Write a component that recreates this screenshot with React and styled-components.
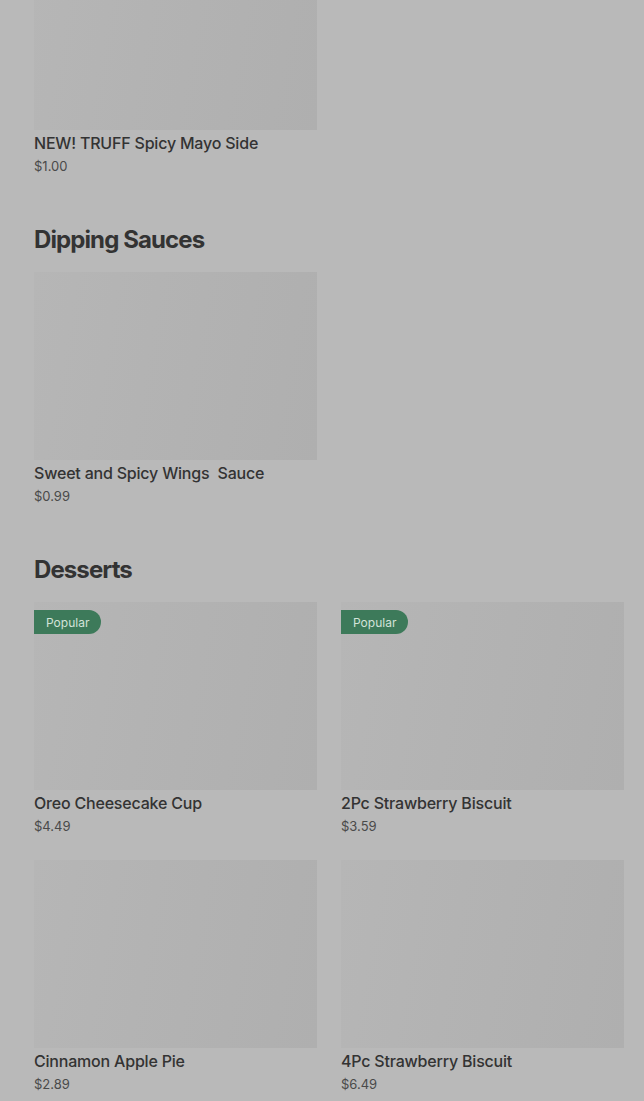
import React from "react";
import styled, { createGlobalStyle } from "styled-components";

const Global = createGlobalStyle`
  html, body { margin: 0; padding: 0; background: #b9b9b9; }
  body { font-family: Inter, Roboto, "Liberation Sans", sans-serif; color: #333; overflow: hidden; }
`;

const Page = styled.div`
  width: 644px;
  height: 1101px;
  overflow: hidden;
  background: #b9b9b9;
  box-sizing: border-box;
  padding: 0 20px 0 34px;
`;

const Shift = styled.div`
  margin-top: -58px;
`;

const Section = styled.section`
  margin-bottom: 48px;
`;

const Heading = styled.h2`
  margin: 0 0 16px;
  font-family: Inter, Roboto, "Liberation Sans", sans-serif;
  font-weight: 700;
  font-size: 24px;
  line-height: 32px;
  letter-spacing: -0.9px;
  color: #333;
`;

const Grid = styled.div`
  display: grid;
  grid-template-columns: 283px 283px;
  column-gap: 24px;
  row-gap: 24px;
`;

const Card = styled.div`
  display: flex;
  flex-direction: column;
`;

const Thumb = styled.div`
  position: relative;
  height: 188px;
  background: linear-gradient(100deg, #b6b6b6 0%, #b3b3b3 40%, #afafaf 100%);
`;

const Badge = styled.span`
  position: absolute;
  top: 8px;
  left: 0;
  height: 24px;
  padding: 0 12px;
  display: flex;
  align-items: center;
  background: #3d7a5a;
  color: #d3e3d9;
  font-size: 12px;
  border-radius: 0 12px 12px 0;
`;

const Title = styled.div`
  margin-top: 3px;
  font-size: 16px;
  font-weight: 500;
  line-height: 20px;
  letter-spacing: -0.2px;
  color: #333;
  white-space: pre;
`;

const Price = styled.div`
  margin-top: 3px;
  font-size: 13px;
  line-height: 20px;
  color: #4a4a4a;
`;

const Item = ({ title, price, popular }) => (
  <Card>
    <Thumb>{popular && <Badge>Popular</Badge>}</Thumb>
    <Title>{title}</Title>
    <Price>{price}</Price>
  </Card>
);

const sections = [
  { heading: null, items: [{ title: "NEW! TRUFF Spicy Mayo Side", price: "$1.00" }] },
  { heading: "Dipping Sauces", items: [{ title: "Sweet and Spicy Wings  Sauce", price: "$0.99" }] },
  {
    heading: "Desserts",
    items: [
      { title: "Oreo Cheesecake Cup", price: "$4.49", popular: true },
      { title: "2Pc Strawberry Biscuit", price: "$3.59", popular: true },
      { title: "Cinnamon Apple Pie", price: "$2.89" },
      { title: "4Pc Strawberry Biscuit", price: "$6.49" },
    ],
  },
];

export default function App() {
  return (
    <Page>
      <Global />
      <Shift>
        {sections.map((s, i) => (
          <Section key={i}>
            {s.heading && <Heading>{s.heading}</Heading>}
            <Grid>
              {s.items.map((it) => (
                <Item key={it.title} {...it} />
              ))}
            </Grid>
          </Section>
        ))}
      </Shift>
    </Page>
  );
}
